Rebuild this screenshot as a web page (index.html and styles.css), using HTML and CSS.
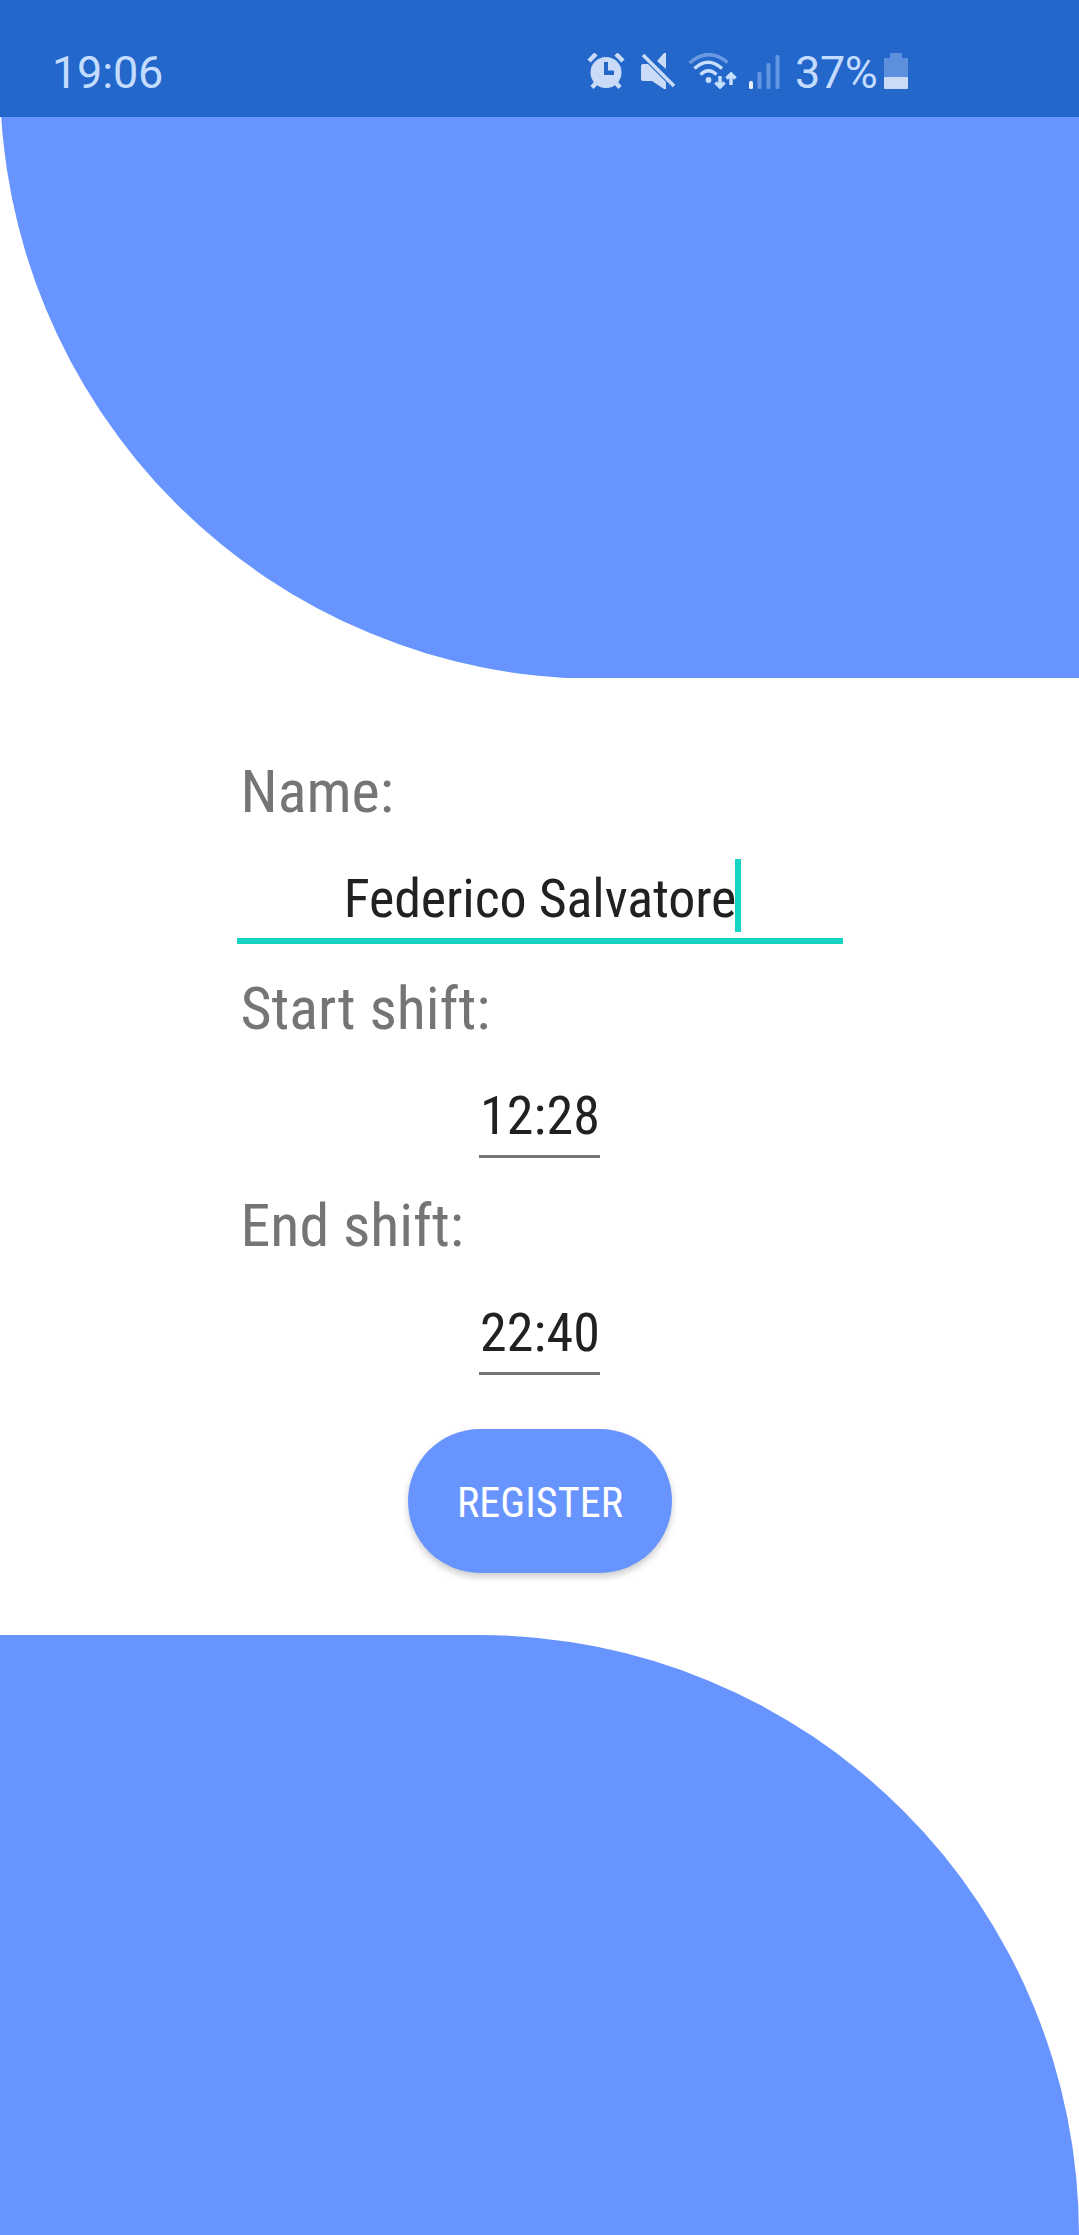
FILE: index.html
```html
<!DOCTYPE html>
<html lang="en">
<head>
<meta charset="utf-8">
<title>Register shift</title>
<link rel="stylesheet" href="styles.css">
</head>
<body>
<div class="screen">
  <header class="status">
    <span class="clock">19:06</span>
    <div class="indicators">
      <svg class="alarm" width="38" height="36" viewBox="0 0 38 36" fill="#c9dbf7">
        <circle cx="19" cy="19.500" r="15.500"/>
        <path d="M2 8 9 1M29 1l7 7M9 30l-4 4.500M29 30l4 4.500" stroke="#c9dbf7" stroke-width="4.500"/>
        <path d="M17 9h4v8.500h6v4.500H17z" fill="#2367ca"/>
      </svg>
      <svg class="mute" width="34" height="36" viewBox="0 0 34 36" fill="#c9dbf7">
        <path d="M2 11h5L25 29v7h-2L11 28H2q-2 0-2-2V13q0-2 2-2zM16 8l7-8h2v16z"/>
        <path d="M2 2l31 31" stroke="#c9dbf7" stroke-width="3.500"/>
      </svg>
      <svg class="wifi" width="49" height="36" viewBox="0 0 49 36" fill="none" stroke="#c7dfff" stroke-width="3.500">
        <path d="M1.500 10Q20.500-6.500 39.500 9.500" stroke="#6999e3"/>
        <path d="M6.500 15.500Q20 3 34 15.500M12.500 21.500Q20.500 14 28.500 21.500"/>
        <circle cx="20.500" cy="27" r="2.900" fill="#c7dfff" stroke="none"/>
        <path d="M32 23v11M27.500 29.500l4.500 4.500 4.500-4.500M43 32V21M38.500 25.500l4.500-4.500 4.500 4.500"/>
      </svg>
      <svg class="signal" width="31" height="36" viewBox="0 0 31 36" fill="#6596e1">
        <rect y="28" width="4" height="8" rx="1.500" fill="#e6f0ff"/>
        <rect x="8.500" y="19" width="4" height="17" rx="1.500"/>
        <rect x="17.500" y="10" width="4" height="26" rx="1.500"/>
        <rect x="26.500" y="2" width="4" height="34" rx="1.500"/>
      </svg>
      <span class="percent">37%</span>
      <svg class="battery" width="24" height="36" viewBox="0 0 24 36">
        <path d="M6 5V1q0-1 1-1h10q1 0 1 1v4h5q1 0 1 1v18H0V6q0-1 1-1z" fill="#5d90dc"/>
        <path d="M0 24h24v11q0 1-1 1H1q-1 0-1-1z" fill="#c9dbf7"/>
      </svg>
    </div>
  </header>
  <div class="top"><div class="top-shape"></div></div>
  <main class="form">
    <div class="label">Name:</div>
    <div class="field focused"><span class="value">Federico Salvatore</span><i class="caret"></i></div>
    <div class="label">Start shift:</div>
    <div class="field time"><span class="value">12:28</span></div>
    <div class="label">End shift:</div>
    <div class="field time"><span class="value">22:40</span></div>
    <button class="register">REGISTER</button>
  </main>
  <div class="bottom"></div>
</div>
</body>
</html>
```
FILE: styles.css
```css
* { box-sizing: border-box; }
body { margin: 0; background: #fff; }
.screen {
  width: 1079px;
  height: 2235px;
  display: flex;
  flex-direction: column;
  overflow: hidden;
  font-family: "Roboto Condensed", Roboto, sans-serif;
  font-stretch: 75%;
}
.status {
  height: 117px;
  flex: none;
  display: flex;
  justify-content: space-between;
  padding: 53px 171px 0 52px;
  background: #2367ca;
  color: #c3dcff;
  font-family: Roboto, sans-serif;
  font-stretch: 100%;
  font-size: 45px;
  line-height: 39px;
}
.clock { letter-spacing: -.2px; }
.indicators { display: flex; }
.indicators svg { display: block; flex: none; }
.mute { margin-left: 16px; }
.wifi { margin-left: 13px; }
.signal { margin-left: 12px; }
.percent { width: 89px; margin-left: 15px; letter-spacing: -.4px; white-space: nowrap; }
.top { height: 561px; flex: none; overflow: hidden; }
.top-shape {
  height: 600px;
  margin-top: -38px;
  background: #6894ff;
  border-bottom-left-radius: 600px;
}
.form {
  height: 957px;
  flex: none;
  display: flex;
  flex-direction: column;
  align-items: center;
  padding-top: 77px;
}
.label {
  width: 598px;
  height: 72px;
  font-size: 60px;
  line-height: 74px;
  color: #757575;
}
.field {
  display: flex;
  justify-content: center;
  height: 95px;
  margin: 22px 0 28px;
  font-size: 54px;
  line-height: 100px;
  color: #212121;
}
.time {
  width: 121px;
  height: 92px;
  margin-bottom: 31px;
  border-bottom: 3px solid #757575;
}
.time .value { margin-left: 1px; letter-spacing: .2px; }
.focused {
  width: 606px;
  border-bottom: 6px solid #16d4c3;
}
.focused .value { letter-spacing: -.12px; }
.caret {
  width: 6px;
  height: 73px;
  margin: 10px -6px 0 -1px;
  background: #16d4c3;
}
.register {
  width: 264px;
  height: 144px;
  margin-top: 23px;
  padding: 2px 0 0 1px;
  border: 0;
  border-radius: 72px;
  background: #6894ff;
  color: #fff;
  font: inherit;
  font-size: 42px;
  letter-spacing: .1px;
  box-shadow: 0 4px 7px rgba(0, 0, 0, .2);
}
.bottom {
  height: 600px;
  flex: none;
  background: #6894ff;
  border-top-right-radius: 600px;
}
```
